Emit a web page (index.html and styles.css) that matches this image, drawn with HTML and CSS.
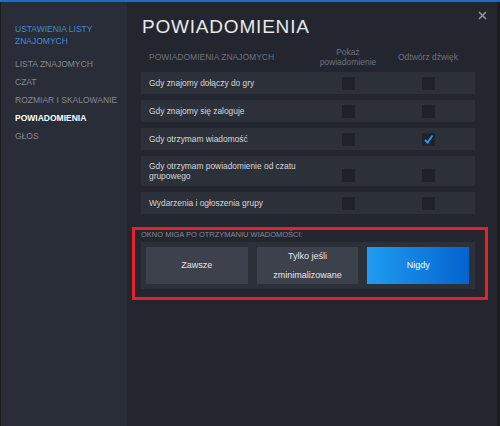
FILE: index.html
```html
<!DOCTYPE html>
<html lang="pl">
<head>
    <meta charset="UTF-8">
    <meta name="viewport" content="width=device-width, initial-scale=1.0">
    <title>Powiadomienia</title>
    <link rel="stylesheet" href="styles.css">
</head>
<body>
    <div class="window">
        <div class="sidebar">
            <div class="sidebar-title">USTAWIENIA LISTY ZNAJOMYCH</div>
            <div class="nav-item">LISTA ZNAJOMYCH</div>
            <div class="nav-item">CZAT</div>
            <div class="nav-item">ROZMIAR I SKALOWANIE</div>
            <div class="nav-item active">POWIADOMIENIA</div>
            <div class="nav-item">GŁOS</div>
        </div>

        <div class="main">
            <div class="close">
                <svg width="9" height="9" viewBox="0 0 9 9"><path d="M1 1L8 8M8 1L1 8" stroke="#8f959c" stroke-width="1.6"/></svg>
            </div>
            <h1>POWIADOMIENIA</h1>

            <div class="table-head">
                <div class="head-label">POWIADOMIENIA ZNAJOMYCH</div>
                <div class="head-col">Pokaż<br>powiadomienie</div>
                <div class="head-col">Odtwórz dźwięk</div>
            </div>

            <div class="row">
                <div class="row-label">Gdy znajomy dołączy do gry</div>
                <div class="cell"><span class="check"></span></div>
                <div class="cell"><span class="check"></span></div>
            </div>
            <div class="row">
                <div class="row-label">Gdy znajomy się zaloguje</div>
                <div class="cell"><span class="check"></span></div>
                <div class="cell"><span class="check"></span></div>
            </div>
            <div class="row">
                <div class="row-label">Gdy otrzymam wiadomość</div>
                <div class="cell"><span class="check"></span></div>
                <div class="cell">
                    <span class="check">
                        <svg width="13" height="13" viewBox="0 0 13 13"><path d="M3 7L5.5 9.5L10.5 2.5" fill="none" stroke="#1a9fff" stroke-width="1.8"/></svg>
                    </span>
                </div>
            </div>
            <div class="row tall">
                <div class="row-label">Gdy otrzymam powiadomienie od czatu<br>grupowego</div>
                <div class="cell"><span class="check"></span></div>
                <div class="cell"><span class="check"></span></div>
            </div>
            <div class="row">
                <div class="row-label">Wydarzenia i ogłoszenia grupy</div>
                <div class="cell"><span class="check"></span></div>
                <div class="cell"><span class="check"></span></div>
            </div>

            <div class="flash-box">
                <div class="flash-label">OKNO MIGA PO OTRZYMANIU WIADOMOŚCI:</div>
                <div class="toggle-group">
                    <div class="toggle">Zawsze</div>
                    <div class="toggle">Tylko jeśli<br>zminimalizowane</div>
                    <div class="toggle selected">Nigdy</div>
                </div>
            </div>
        </div>

        <div class="edge"></div>
    </div>
</body>
</html>
```

FILE: styles.css
```css
body {
    margin: 0;
    background-color: #23262e;
    font-family: "Liberation Sans", Arial, sans-serif;
}

.window {
    display: flex;
    height: 426px;
    border-top: 2px solid #1b6fc2;
    box-sizing: border-box;
}

/* left navigation */
.sidebar {
    width: 127px;
    flex-shrink: 0;
    background-color: #292d37;
    border-left: 1px solid #1b1d22;
    box-sizing: border-box;
    padding: 21px 0 0 14px;
}

.sidebar-title {
    color: #3d8bd6;
    font-size: 8.5px;
    line-height: 12px;
    width: 90px;
    margin-bottom: 8px;
}

.nav-item {
    color: #848a92;
    font-size: 8.5px;
    line-height: 18px;
    white-space: nowrap;
}

.nav-item.active {
    color: #ffffff;
    font-weight: bold;
}

/* settings panel */
.main {
    flex: 1;
    position: relative;
    padding: 0 22px 0 14px;
}

.close {
    position: absolute;
    top: 4px;
    right: 10px;
}

h1 {
    margin: 14px 0 0 1px;
    color: #e6e9ec;
    font-size: 19px;
    font-weight: normal;
    letter-spacing: 0.8px;
    line-height: 22px;
}

.table-head,
.row {
    display: grid;
    grid-template-columns: 1fr 80px 80px;
    padding: 0 7px 0 8px;
    align-items: center;
}

.table-head {
    height: 34px;
    padding-top: 4px;
    box-sizing: border-box;
    color: #6c737c;
    font-size: 8.5px;
    line-height: 10px;
}

.head-col {
    text-align: center;
}

.row {
    height: 22px;
    margin-bottom: 6px;
    background-color: #2c3039;
    color: #d5d8dc;
    font-size: 8.4px;
}

.row.tall {
    height: 30px;
    line-height: 10px;
    align-items: end;
    padding-bottom: 4px;
    box-sizing: border-box;
}

.row.tall .row-label {
    align-self: center;
    margin-top: 4px;
}

.cell {
    display: flex;
    justify-content: center;
}

.check {
    width: 13px;
    height: 13px;
    background-color: #1f2228;
    border-radius: 1px;
    display: block;
}

.check svg {
    display: block;
}

/* flashing window option */
.flash-box {
    margin: 13px -13px 0 -9px;
    border: 3px solid #e8202a;
    padding: 0 10px 8px 6px;
}

.flash-label {
    color: #858b93;
    font-size: 7.5px;
    line-height: 9px;
    margin-bottom: 3px;
}

.toggle-group {
    display: flex;
    gap: 9px;
    padding: 5px 6px 5px 5px;
    background-color: #2c3039;
}

.toggle {
    flex: 1;
    height: 37px;
    display: flex;
    align-items: center;
    justify-content: center;
    text-align: center;
    background-color: #3c414c;
    color: #e4e6e8;
    font-size: 9px;
    line-height: 19px;
}

.toggle.selected {
    background: linear-gradient(90deg, #1f9df0, #0563d0);
    color: #ffffff;
}

.edge {
    width: 3px;
    flex-shrink: 0;
    background-color: #1a1c21;
}
```
